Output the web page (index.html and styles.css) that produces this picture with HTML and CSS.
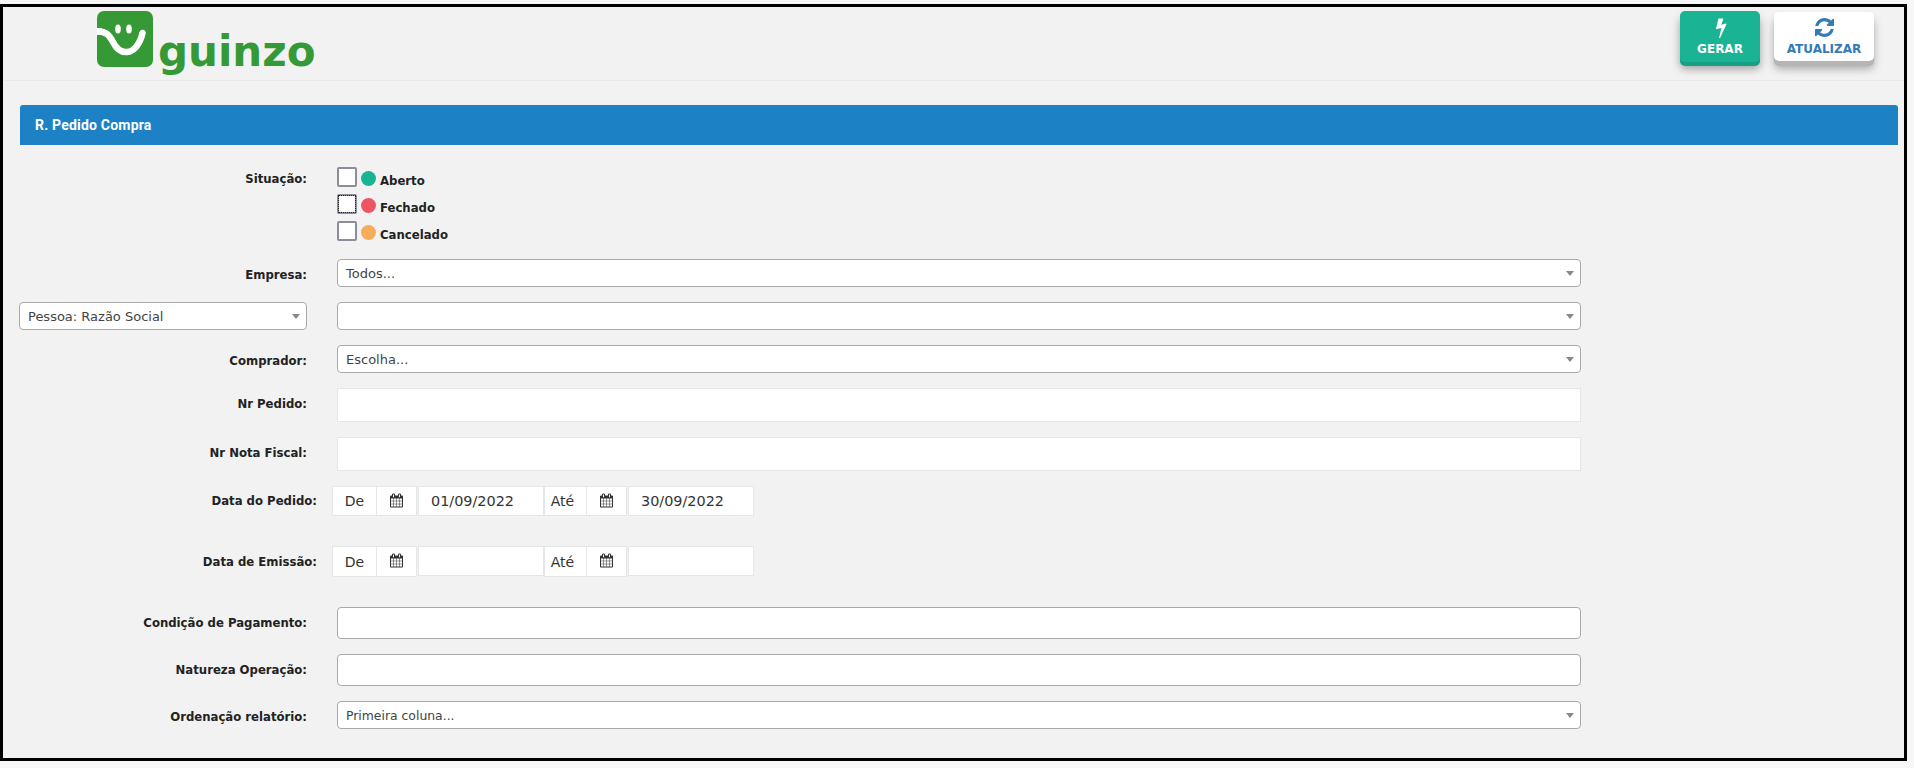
FILE: index.html
```html
<!DOCTYPE html>
<html lang="pt">
<head>
<meta charset="utf-8">
<title>R. Pedido Compra</title>
<link rel="stylesheet" href="styles.css">
</head>
<body>
<svg class="defs" width="0" height="0" aria-hidden="true">
  <symbol id="cal" viewBox="0 0 1664 1792"><path transform="translate(-64 0)" d="M192 1664h288v-288h-288v288zm352 0h320v-288h-320v288zm-352-352h288v-320h-288v320zm352 0h320v-320h-320v320zm-352-384h288v-288h-288v288zm736 736h320v-288h-320v288zm-384-736h320v-288h-320v288zm768 736h288v-288h-288v288zm-384-352h320v-320h-320v320zm-352-864v-288q0-13-9.5-22.5t-22.5-9.5h-64q-13 0-22.5 9.5t-9.5 22.5v288q0 13 9.5 22.5t22.5 9.5h64q13 0 22.5-9.5t9.5-22.5zm736 864h288v-320h-288v320zm-384-384h320v-288h-320v288zm384 0h288v-288h-288v288zm32-480v-288q0-13-9.5-22.5t-22.5-9.5h-64q-13 0-22.5 9.5t-9.5 22.5v288q0 13 9.5 22.5t22.5 9.5h64q13 0 22.5-9.5t9.5-22.5zm384-64v1280q0 52-38 90t-90 38h-1408q-52 0-90-38t-38-90v-1280q0-52 38-90t90-38h128v-96q0-66 47-113t113-47h64q66 0 113 47t47 113v96h384v-96q0-66 47-113t113-47h64q66 0 113 47t47 113v96h128q52 0 90 38t38 90z"/></symbol>
</svg>
<div class="frame">
  <header class="topbar">
    <div class="logo">
      <svg class="logo-mark" viewBox="0 0 56 56">
        <rect width="56" height="56" rx="7" fill="#359a35"/>
        <path d="M0 20.500C9 20 12 24 16 31C20 39 25 41.500 30 41C37 40.500 43 33 45.500 22" fill="none" stroke="#fff" stroke-width="6.500" stroke-linecap="round"/>
        <path d="M0 17H5V24H0Z" fill="#fff"/>
        <ellipse cx="21" cy="18" rx="2.800" ry="4.600" fill="#fff"/>
        <ellipse cx="32" cy="18" rx="2.800" ry="4.600" fill="#fff"/>
      </svg>
      <span class="logo-text">guinzo</span>
    </div>
    <div class="actions">
      <button class="btn btn-gerar" type="button">
        <svg class="btn-icon btn-icon-bolt" viewBox="300 0 1060 1792"><path d="M1333 566q18 20 7 44l-540 1157q-13 25-42 25-4 0-14-2-17-5-25.500-19t-4.500-30l197-808-406 101q-4 1-12 1-18 0-31-11-18-15-13-39l201-825q4-14 16-23t28-9h328q19 0 32 12.500t13 29.500q0 8-5 18l-171 463 396-98q8-2 12-2 19 0 34 15z"/></svg>
        <span>GERAR</span>
      </button>
      <button class="btn btn-atualizar" type="button">
        <svg class="btn-icon" viewBox="128 128 1536 1536"><path d="M1639 1056q0 5-1 7-64 268-268 434.500t-478 166.500q-146 0-282.500-55t-243.500-157l-129 129q-19 19-45 19t-45-19-19-45v-448q0-26 19-45t45-19h448q26 0 45 19t19 45-19 45l-137 137q71 66 161 102t187 36q134 0 250-65t186-179q11-17 53-117 8-23 30-23h192q13 0 22.500 9.500t9.500 22.500zm25-800v448q0 26-19 45t-45 19h-448q-26 0-45-19t-19-45 19-45l138-138q-148-137-349-137-134 0-250 65t-186 179q-11 17-53 117-8 23-30 23h-199q-13 0-22.500-9.500t-9.500-22.500v-7q65-268 270-434.500t480-166.500q146 0 284 55.500t245 156.500l130-129q19-19 45-19t45 19 19 45z"/></svg>
        <span>ATUALIZAR</span>
      </button>
    </div>
  </header>

  <main class="content">
    <div class="panel-title">R. Pedido Compra</div>

    <form class="form">
      <div class="row row-status">
        <label class="label">Situação:</label>
        <div class="status-list">
          <label class="status"><span class="check"></span><span class="dot dot-green"></span><b>Aberto</b></label>
          <label class="status"><span class="check check-focus"></span><span class="dot dot-red"></span><b>Fechado</b></label>
          <label class="status"><span class="check"></span><span class="dot dot-orange"></span><b>Cancelado</b></label>
        </div>
      </div>

      <div class="row row-empresa">
        <label class="label">Empresa:</label>
        <div class="select"><span>Todos...</span><i class="caret"></i></div>
      </div>

      <div class="row row-gap">
        <div class="select select-label"><span>Pessoa: Razão Social</span><i class="caret"></i></div>
        <div class="select"><span></span><i class="caret"></i></div>
      </div>

      <div class="row row-gap">
        <label class="label">Comprador:</label>
        <div class="select"><span>Escolha...</span><i class="caret"></i></div>
      </div>

      <div class="row row-gap">
        <label class="label">Nr Pedido:</label>
        <input class="plain" type="text">
      </div>

      <div class="row row-gap">
        <label class="label">Nr Nota Fiscal:</label>
        <input class="plain" type="text">
      </div>

      <div class="row row-gap">
        <label class="label label-date">Data do Pedido:</label>
        <div class="dates">
          <span class="addon addon-de">De</span>
          <span class="addon addon-cal"><svg class="cal"><use href="#cal"/></svg></span>
          <input class="date" type="text" value="01/09/2022">
          <span class="addon addon-ate">Até</span>
          <span class="addon addon-cal"><svg class="cal"><use href="#cal"/></svg></span>
          <input class="date" type="text" value="30/09/2022">
        </div>
      </div>

      <div class="row row-date-second">
        <label class="label label-date label-date-tall">Data de Emissão:</label>
        <div class="dates dates-tall">
          <span class="addon addon-de">De</span>
          <span class="addon addon-cal"><svg class="cal"><use href="#cal"/></svg></span>
          <input class="date" type="text">
          <span class="addon addon-ate">Até</span>
          <span class="addon addon-cal"><svg class="cal"><use href="#cal"/></svg></span>
          <input class="date" type="text">
        </div>
      </div>

      <div class="row row-date-second">
        <label class="label">Condição de Pagamento:</label>
        <input class="outlined" type="text">
      </div>

      <div class="row row-gap">
        <label class="label">Natureza Operação:</label>
        <input class="outlined" type="text">
      </div>

      <div class="row row-gap">
        <label class="label">Ordenação relatório:</label>
        <div class="select select-ord"><span>Primeira coluna...</span><i class="caret"></i></div>
      </div>
    </form>
  </main>
</div>
</body>
</html>
```
FILE: styles.css
```css
* { box-sizing: border-box; }
html, body { margin: 0; padding: 0; }
body {
  background: #f7f7f7;
  padding-top: 4px;
  height: 768px;
  overflow: hidden;
  font-family: "DejaVu Sans", Verdana, sans-serif;
  color: #222;
}
.defs { position: absolute; }

.frame {
  width: 1907px;
  height: 757px;
  border: 3px solid #000;
  background: #f2f2f2;
}

.topbar {
  height: 74px;
  border-bottom: 1px solid #e7eaec;
  display: flex;
  justify-content: space-between;
  padding: 4px 30px 0 94px;
}
.logo { display: flex; align-items: flex-start; }
.logo-mark { width: 56px; height: 56px; flex: none; }
.logo-text {
  font-family: "DejaVu Sans", sans-serif;
  font-weight: 700;
  font-size: 42px;
  line-height: 1;
  margin: 20px 0 0 5px;
  color: #359a35;
}

.actions { display: flex; gap: 14px; align-items: flex-start; }
.btn {
  border: 0;
  padding: 7px 0 0;
  height: 51px;
  border-radius: 5px;
  display: flex;
  flex-direction: column;
  align-items: center;
  font-family: "DejaVu Sans", sans-serif;
  font-weight: 700;
  font-size: 12px;
  line-height: 14px;
}
.btn-icon { display: block; height: 19px; width: 19px; fill: currentColor; margin-bottom: 5px; }
.btn-icon-bolt { height: 21px; width: 21px; margin: -1px 0 4px; }
.btn-gerar {
  width: 80px;
  background: #1ab394;
  color: #fff;
  box-shadow: 0 4px 0 #18a085, 0 7px 8px rgba(0, 0, 0, .35);
}
.btn-atualizar {
  width: 100px;
  background: #fff;
  color: #337ab7;
  margin-top: 1px;
  height: 49px;
  padding-top: 6px;
  box-shadow: 0 5px 0 #b5b5b5, 0 8px 8px rgba(0, 0, 0, .3);
}

.content { padding: 24px 6px 0 17px; }
.panel-title {
  height: 41px;
  background: #1c81c5;
  border-radius: 3px 3px 0 0;
  border-bottom: 1px solid #fff;
  color: #fff;
  font-family: Roboto, "Open Sans", sans-serif;
  font-weight: 700;
  font-size: 14px;
  letter-spacing: .2px;
  line-height: 40px;
  padding-left: 15px;
}

.form { display: flex; flex-direction: column; }
.row { display: flex; align-items: flex-start; }
.row-gap { margin-top: 15px; }
.label {
  width: 287px;
  flex: none;
  margin-right: 30px;
  padding-top: 6.5px;
  text-align: right;
  font-weight: 700;
  font-size: 11.7px;
  line-height: 18px;
  color: #222;
}

.row-status { margin-top: 21px; }
.row-status .label { padding-top: 3px; }
.status-list { display: flex; flex-direction: column; gap: 7px; }
.status { display: flex; align-items: flex-start; height: 20px; }
.status b { font-size: 11.7px; line-height: 20px; margin: 4px 0 0 4px; color: #222; }
.check {
  width: 20px;
  height: 20px;
  background: #fff;
  border: 2px solid #8c8c9a;
  border-radius: 2px;
}
.check-focus { outline: 1px dotted #222; outline-offset: -2px; }
.dot { width: 15px; height: 15px; border-radius: 50%; margin: 4px 0 0 4px; }
.dot-green { background: #1ab394; }
.dot-red { background: #ed5565; }
.dot-orange { background: #f8ac59; }

.row-empresa { margin-top: 18px; }
.select {
  flex: none;
  width: 1244px;
  height: 28px;
  background: #fff;
  border: 1px solid #aaa;
  border-radius: 4px;
  font-size: 13px;
  line-height: 24px;
  color: #444;
  padding: 0 6px 0 8px;
  display: flex;
  justify-content: space-between;
  align-items: center;
}
.select span { padding-top: 2px; }
.select-label { width: 288px; margin: 0 30px 0 -1px; }
.select-ord { font-size: 12.4px; }
.caret {
  width: 0;
  height: 0;
  border-left: 4px solid transparent;
  border-right: 4px solid transparent;
  border-top: 5px solid #888;
}

.plain {
  flex: none;
  width: 1244px;
  height: 34px;
  background: #fff;
  border: 1px solid #e5e6e7;
  outline: 0;
}
.outlined {
  flex: none;
  width: 1244px;
  height: 32px;
  background: #fff;
  border: 1px solid #aaa;
  border-radius: 4px;
  outline: 0;
}

.row-date-second { margin-top: 30px; }
.label-date { width: 297px; margin-right: 15px; padding-top: 5.5px; }
.label-date-tall { padding-top: 6.5px; }
.dates { display: flex; height: 30px; align-items: flex-start; }
.dates-tall { height: 31px; }
.dates-tall .date { height: 30px; }
.addon {
  height: 100%;
  background: #fff;
  border: 1px solid #e5e6e7;
  font-size: 14px;
  color: #333;
  display: flex;
  align-items: center;
  justify-content: center;
}
.addon-de { width: 44px; border-right: 0; }
.addon-cal { width: 41px; }
.addon-ate { width: 42px; border-right: 0; padding-right: 6px; }
.cal { width: 13px; height: 15px; fill: #333; margin-top: -2px; }
.date {
  width: 126px;
  height: 100%;
  background: #fff;
  border: 1px solid #e5e6e7;
  outline: 0;
  padding: 0 12px;
  margin-left: 1px;
  font-family: "DejaVu Sans", sans-serif;
  font-size: 14.4px;
  color: #333;
}
```
